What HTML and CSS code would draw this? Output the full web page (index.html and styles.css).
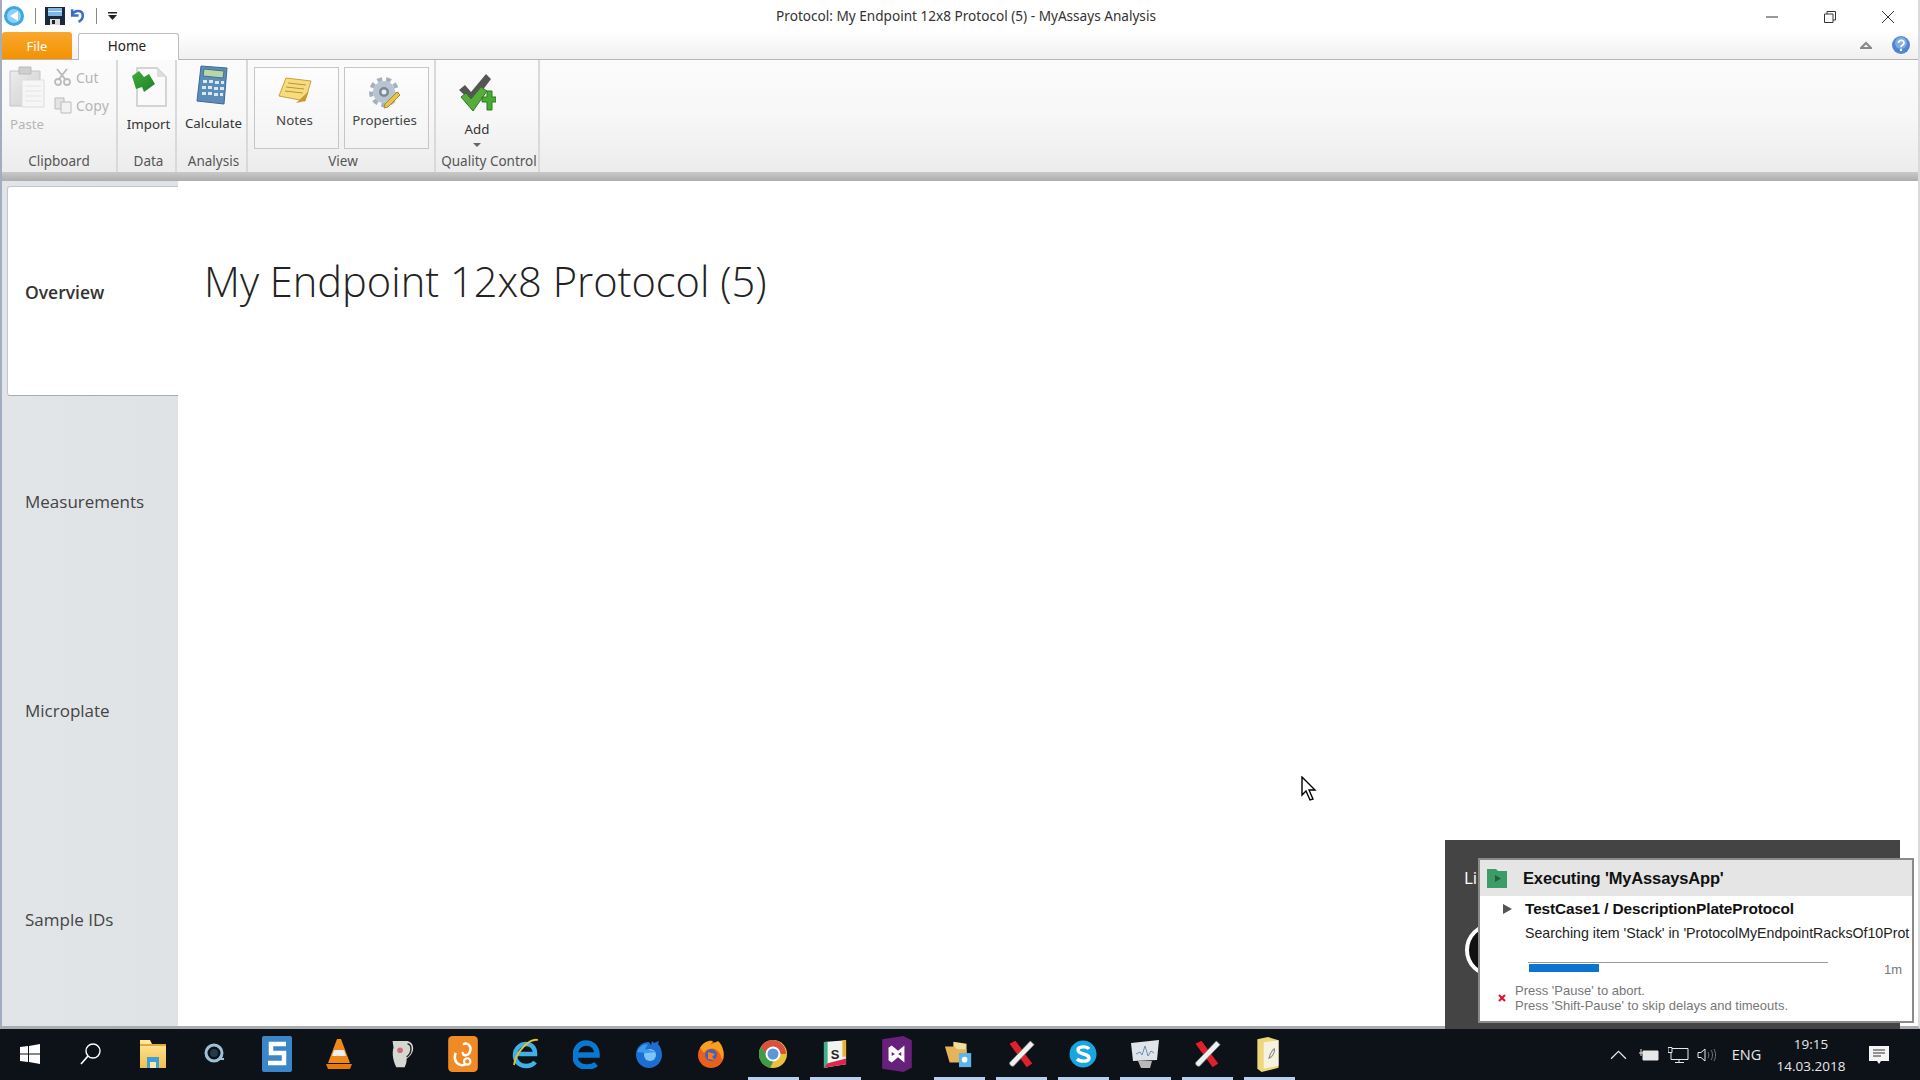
FILE: index.html
```html
<!DOCTYPE html>
<html lang="en">
<head>
<meta charset="utf-8">
<title>Protocol: My Endpoint 12x8 Protocol (5) - MyAssays Analysis</title>
<link rel="stylesheet" href="styles.css">
</head>
<body>
<svg class="defs" width="0" height="0" aria-hidden="true">
  <defs>
    <linearGradient id="gGreen" x1="0" y1="0" x2="1" y2="1"><stop offset="0" stop-color="#3fae3a"/><stop offset="1" stop-color="#1f7f2a"/></linearGradient>
    <linearGradient id="gFolder" x1="0" y1="0" x2="0" y2="1"><stop offset="0" stop-color="#ffe9a0"/><stop offset="1" stop-color="#f2c04a"/></linearGradient>
    <linearGradient id="gClip" x1="0" y1="0" x2="1" y2="1"><stop offset="0" stop-color="#ececec"/><stop offset="1" stop-color="#cfcfcf"/></linearGradient>
    <symbol id="scroll" viewBox="0 0 32 32">
      <path d="M4 5l6-3 18 24-6 4z" fill="#e0202c"/>
      <path d="M26 2l4 4L8 29c-2 1-5-2-4-4z" fill="#f0f0f0" stroke="#777" stroke-width=".8"/>
      <path d="M4 5l6-3 6 8-5 5z" fill="#e0202c"/>
    </symbol>
  </defs>
</svg>

<div class="app">
  <header class="titlebar">
    <div class="qat">
      <svg class="q-app" viewBox="0 0 20 20"><circle cx="10" cy="10" r="10" fill="#3ea6e6"/><circle cx="10" cy="10" r="7" fill="#8fd0f5"/><path d="M14 5v10L6 10z" fill="#fff"/></svg>
      <span class="q-sep"></span>
      <svg class="q-save" viewBox="0 0 20 20"><path d="M0 1h20v18H0z" fill="#1b2a3a"/><path d="M3 2h14v8H3z" fill="#7fb7e8"/><path d="M3 5h14v1H3z" fill="#dfeefa"/><path d="M5 13h10v6H5z" fill="#ddd"/><path d="M7 14h3v4H7z" fill="#222"/></svg>
      <svg class="q-undo" viewBox="0 0 16 16"><path d="M3 2v6h6" fill="none" stroke="#3a6fc4" stroke-width="2.400"/><path d="M3 7c3-5 10-4 10 1 0 3-2 5-4 6" fill="none" stroke="#3a6fc4" stroke-width="2.400"/></svg>
      <span class="q-sep q-sep-2"></span>
      <svg class="q-more" viewBox="0 0 9 8"><path d="M0 0h9v1.500H0z" fill="#222"/><path d="M0 3h9L4.500 8z" fill="#222"/></svg>
    </div>
    <div class="window-title">Protocol: My Endpoint 12x8 Protocol (5) - MyAssays Analysis</div>
    <div class="window-controls">
      <svg class="wc" viewBox="0 0 12 12"><path d="M0 6h12" stroke="#333" stroke-width="1"/></svg>
      <svg class="wc" viewBox="0 0 12 12"><path d="M.5 3h8.500v8.500H.5zM3 3V.5h8.500V9H9" fill="none" stroke="#333"/></svg>
      <svg class="wc" viewBox="0 0 12 12"><path d="M0 0l12 12M12 0L0 12" stroke="#333"/></svg>
    </div>
  </header>

  <nav class="tabrow">
    <div class="tab-file">File</div>
    <div class="tab-home">Home</div>
    <div class="tab-right">
      <svg class="collapse" viewBox="0 0 12 9"><path d="M1 7l5-5 5 5z" fill="none" stroke="#888" stroke-width="2"/></svg>
      <svg class="help" viewBox="0 0 18 18"><circle cx="9" cy="9" r="9" fill="#4f86d0"/><circle cx="9" cy="7" r="6" fill="#9fc4ee" opacity=".6"/><path d="M6.500 7c0-3.500 5.500-3.500 5.500 0 0 2-3 2-3 4" fill="none" stroke="#fff" stroke-width="1.800"/><circle cx="9" cy="14" r="1.200" fill="#fff"/></svg>
    </div>
  </nav>

  <section class="ribbon">
    <div class="group g-clip">
      <div class="group-body clip-body">
        <div class="big disabled">
          <svg class="ic-paste" viewBox="0 0 36 42"><path d="M1 5h30v35H1z" fill="url(#gClip)" stroke="#c4c4c4"/><path d="M10 1h12v7H10z" fill="#cfcfcf" stroke="#bbb"/><path d="M13 14h22v27H13z" fill="#f6f6f6" stroke="#ddd"/><path d="M16 20h16M16 25h16M16 30h16M16 35h16" stroke="#e4e4e4"/></svg>
          <span class="big-label">Paste</span>
        </div>
        <div class="clip-small">
          <div class="small disabled">
            <svg class="ic-small" viewBox="0 0 18 18"><path d="M3 1l8 10M13 1L5 11" stroke="#bbb" stroke-width="2"/><circle cx="4" cy="14" r="3" fill="none" stroke="#bbb" stroke-width="1.800"/><circle cx="13" cy="14" r="3" fill="none" stroke="#bbb" stroke-width="1.800"/></svg>
            <span>Cut</span>
          </div>
          <div class="small disabled">
            <svg class="ic-small" viewBox="0 0 18 18"><path d="M1 2h9v11H1z" fill="#e4e4e4" stroke="#bbb"/><path d="M7 6h10v11H7z" fill="#f2f2f2" stroke="#bbb"/></svg>
            <span>Copy</span>
          </div>
        </div>
      </div>
      <div class="group-label">Clipboard</div>
    </div>

    <div class="group g-data">
      <div class="group-body col">
        <svg class="ic-import" viewBox="0 0 36 40"><path d="M6 1h20l9 9v29H6z" fill="#fafafa" stroke="#c8c8c8" stroke-width="1.500"/><path d="M26 1v9h9z" fill="#ddd"/><path d="M1 9l7-5 5 6 5-3 6 10-11 8-2-5-6 2z" fill="url(#gGreen)"/></svg>
        <span class="big-label">Import</span>
      </div>
      <div class="group-label">Data</div>
    </div>

    <div class="group g-analysis">
      <div class="group-body col">
        <svg class="ic-calc" viewBox="0 0 36 42"><path d="M5 1l26 2-3 36-27-3z" fill="#5b8db8" stroke="#3c6a94"/><path d="M8 4l20 2-1 7-20-2z" fill="#b9d6a6" stroke="#48708f"/><g fill="#d9e8f4"><path d="M7 15h4v3H7zM13 15h4v3h-4zM19 16h4v3h-4zM25 16h3v3h-3zM6 21h4v3H6zM12 21h4v3h-4zM18 22h4v3h-4zM24 22h4v3h-4zM6 27h4v3H6zM12 27h4v3h-4zM18 28h4v3h-4zM24 28h3v3h-3z"/></g></svg>
        <span class="big-label">Calculate</span>
      </div>
      <div class="group-label">Analysis</div>
    </div>

    <div class="group g-view">
      <div class="group-body view-body">
        <div class="toggle">
          <svg class="ic-notes" viewBox="0 0 34 30"><path d="M8 2l25 3-6 20-26-5z" fill="#f7dc7e" stroke="#c9a23c"/><path d="M10 7l18 2M8 11l18 2M7 15l18 2" stroke="#b8953a"/><path d="M18 27l9-2 4-10z" fill="#c99a2a"/></svg>
          <span class="toggle-label">Notes</span>
        </div>
        <div class="toggle">
          <svg class="ic-props" viewBox="0 0 34 34"><circle cx="16" cy="16" r="11" fill="#b8c3d0"/><circle cx="16" cy="16" r="13" fill="none" stroke="#a4b0bf" stroke-width="4" stroke-dasharray="5 4"/><circle cx="16" cy="16" r="5" fill="#7b8794"/><circle cx="16" cy="16" r="2.500" fill="#e8edf2"/><path d="M17 28l12-12 3 3-12 12-4 1z" fill="#e8c24a" stroke="#a98a2c"/></svg>
          <span class="toggle-label">Properties</span>
        </div>
      </div>
      <div class="group-label">View</div>
    </div>

    <div class="group g-qc">
      <div class="group-body qc-body">
        <svg class="ic-add" viewBox="0 0 38 38"><path d="M1 17l6-5 6 7L28 1l5 5-18 24z" fill="#555"/><path d="M3 24l5-4 5 6 10-12 6 4-14 20z" fill="#56ad3c" stroke="#2d7a28"/><path d="M24 24h5v-6h5v6h4v5h-4v8h-5v-8h-5z" fill="#48ac32" stroke="#287a20"/></svg>
        <span class="big-label add-label">Add</span>
        <span class="drop"></span>
      </div>
      <div class="group-label">Quality Control</div>
    </div>
  </section>

  <div class="ribbon-shadow"></div>

  <main class="content">
    <aside class="sidebar">
      <div class="side-item active">Overview</div>
      <div class="side-item">Measurements</div>
      <div class="side-item">Microplate</div>
      <div class="side-item">Sample IDs</div>
    </aside>
    <div class="page">
      <h1>My Endpoint 12x8 Protocol (5)</h1>
    </div>
  </main>
</div>

<footer class="taskbar">
  <div class="tb-apps">
    <div class="slot s-start"><svg viewBox="0 0 20 20" class="i20"><path d="M0 3l8-1v7.500H0zM9 2l11-2v9.500H9zM0 10.500h8V18l-8-1zM9 10.500h11V20L9 18z" fill="#fff"/></svg></div>
    <div class="slot"><svg viewBox="0 0 24 24" class="i24"><circle cx="14" cy="9" r="7" fill="none" stroke="#fff" stroke-width="1.400"/><path d="M9 14l-7 8" stroke="#fff" stroke-width="1.600"/></svg></div>
    <div class="slot"><svg viewBox="0 0 28 30" class="i28"><path d="M1 1h10l2 4h14v24H1z" fill="url(#gFolder)"/><path d="M1 5h26v2H1z" fill="#e2a830"/><path d="M8 18h12v11H8z" fill="#3f9fd8"/><path d="M11 23h6v6h-6z" fill="#f5e8b0"/></svg></div>
    <div class="slot"><svg viewBox="0 0 24 24" class="i24"><circle cx="11" cy="11" r="8" fill="none" stroke="#9fc0d8" stroke-width="3"/><circle cx="11" cy="11" r="4" fill="#25384a"/><path d="M15 17h6" stroke="#9fc0d8" stroke-width="2"/></svg></div>
    <div class="slot"><svg viewBox="0 0 30 36" class="i-s"><rect width="30" height="36" rx="2" fill="#3b86c8"/><path d="M24 8H9v9h13v10H6" fill="none" stroke="#fff" stroke-width="4.500"/></svg></div>
    <div class="slot"><svg viewBox="0 0 26 30" class="i28"><path d="M11 0h4l9 24H2z" fill="#f08a16"/><path d="M8 11h10l2 6H6z" fill="#eee"/><path d="M0 25h26l-2 5H2z" fill="#e87a0c"/></svg></div>
    <div class="slot"><svg viewBox="0 0 28 32" class="i28"><path d="M5 2h15c3 0 7 2 7 8 0 5-4 9-7 11 0 5-1 6-2 9H9C6 24 4 16 6 9z" fill="#d7d7d2"/><path d="M21 5c5 1 5 10-1 14" fill="none" stroke="#222" stroke-width="1.500"/><circle cx="13" cy="12" r="3" fill="#c8707a"/></svg></div>
    <div class="slot"><svg viewBox="0 0 28 34" class="i-s"><rect width="28" height="34" rx="4" fill="#ef8a24"/><path d="M7 16c-3 9 4 13 9 11M14 8c5-3 9 3 6 8-3 4-7 2-6-1" fill="none" stroke="#fff" stroke-width="2.400"/><circle cx="18" cy="24" r="3" fill="none" stroke="#fff" stroke-width="2"/></svg></div>
    <div class="slot"><svg viewBox="0 0 30 34" class="i-s"><path d="M6 17h19c0-7-4-10-9-10S5 11 5 18s5 11 11 11c4 0 7-1 9-4" fill="none" stroke="#3fb0e8" stroke-width="4.500"/><path d="M28 3C20 1 6 14 4 28" fill="none" stroke="#e8c030" stroke-width="1.800"/></svg></div>
    <div class="slot"><svg viewBox="0 0 28 30" class="i28"><path d="M3 16h21c0-8-5-12-11-12S2 9 2 17s6 11 12 11c4 0 7-1 9-3" fill="none" stroke="#0a78d0" stroke-width="5.500"/></svg></div>
    <div class="slot"><svg viewBox="0 0 30 30" class="i30"><path d="M15 3C7 3 2 9 2 16s6 13 13 13 13-6 13-13c0-5-2-9-4-11l1-3-5 2-2-2-1 4z" fill="#1c6fd0"/><circle cx="16" cy="16" r="6" fill="#7ec4f4"/><path d="M3 13c2-5 6-8 11-8l-3 5 12 3-10 1z" fill="#3a9cec"/></svg></div>
    <div class="slot"><svg viewBox="0 0 30 30" class="i30"><circle cx="15" cy="16" r="13" fill="#e8601c"/><circle cx="15" cy="16" r="6" fill="#4a60b8"/><path d="M4 9c3-6 9-8 13-7l-3 4 8-4c5 4 7 12 4 19-1-7-6-13-12-11-3 0-5 2-6 4z" fill="#f9a020"/><path d="M12 13l7 2-3 3 3 3-7-1z" fill="#f08020"/></svg></div>
    <div class="slot run"><svg viewBox="0 0 30 30" class="i30"><circle cx="15" cy="15" r="14" fill="#e8c23a"/><path d="M15 1a14 14 0 0 0-12 7l7 12 5-5h13A14 14 0 0 0 15 1z" fill="#d9503f"/><path d="M3 8a14 14 0 0 0 9 21l5-10-7-2z" fill="#3f9a4a"/><circle cx="15" cy="15" r="6.500" fill="#5a96d8" stroke="#fff" stroke-width="2"/></svg></div>
    <div class="slot run"><svg viewBox="0 0 26 32" class="i26"><path d="M1 3l24-2v26L1 31z" fill="#f3f3f0"/><path d="M1 3l4 0v28l-4 0z" fill="#3fb08c"/><path d="M21 1h4v18h-4z" fill="#ecb22e"/><path d="M1 31l24-4v-6L5 26z" fill="#dc2850"/><text x="13" y="21" class="slack-s">S</text></svg></div>
    <div class="slot"><svg viewBox="0 0 28 34" class="i-s"><path d="M20 0l8 4v26l-8 4-20-3V3z" fill="#68217a"/><path d="M6 11l3-2 6 5 6-5v16l-6-5-6 5-3-2v-12zm3 4v4l3-2zm9 0l-3 2 3 2z" fill="#fff" fill-rule="evenodd"/></svg></div>
    <div class="slot run"><svg viewBox="0 0 30 32" class="i30"><path d="M9 3l14 2v18H9z" fill="#f4dc9a"/><path d="M0 8h10l3 3h10v14H5z" fill="#e3b45a"/><path d="M15 15h13v15H15z" fill="#5cb4e8"/><circle cx="21" cy="22" r="3" fill="#fff"/></svg></div>
    <div class="slot run"><svg viewBox="0 0 32 32" class="i30"><use href="#scroll"/></svg></div>
    <div class="slot run"><svg viewBox="0 0 28 30" class="i28"><circle cx="14" cy="15" r="13.500" fill="#19a5e0"/><path d="M20 10c-2-3-11-3-11 1 0 5 11 3 11 8 0 4-9 4-12 1" fill="none" stroke="#fff" stroke-width="3.400"/></svg></div>
    <div class="slot run"><svg viewBox="0 0 30 30" class="i30"><path d="M1 4l28-3-2 20-24 1z" fill="#e0e4e8"/><path d="M6 15l4-2 2 3 3-9 3 10 3-5 3 2" fill="none" stroke="#6a8eb8"/><path d="M8 22h14l-2 7H11z" fill="#b8b8b8"/></svg></div>
    <div class="slot run"><svg viewBox="0 0 32 32" class="i30"><use href="#scroll"/></svg></div>
    <div class="slot run"><svg viewBox="0 0 24 34" class="i-s"><path d="M1 3l10-2 10 3v26l-16 4-4-3z" fill="#eed77a"/><path d="M7 6l14-2v24L7 31z" fill="#f6f2df"/><path d="M12 21c3-1 6-6 5-9-3 2-4 5-5 9z" fill="none" stroke="#888"/></svg></div>
  </div>
  <div class="tray">
    <svg class="tr-chev" viewBox="0 0 16 9"><path d="M1 8l7-7 7 7" fill="none" stroke="#e8e8e8" stroke-width="1.200"/></svg>
    <svg class="tr-bat" viewBox="0 0 20 12"><path d="M4 2h15v9H4z" fill="#e8e8e8" stroke="#e8e8e8"/><path d="M0 4h4M2 0v7" stroke="#e8e8e8"/></svg>
    <svg class="tr-net" viewBox="0 0 21 16"><path d="M3 1.500h17v11H3z" fill="none" stroke="#e8e8e8"/><path d="M11 13v2M7 15.500h9" stroke="#e8e8e8"/><path d="M0 .5h4v5H0z" fill="#0c1118" stroke="#e8e8e8"/></svg>
    <svg class="tr-vol" viewBox="0 0 20 14"><path d="M1 4.500h3L8 1v12L4 9.500H1z" fill="none" stroke="#e8e8e8"/><path d="M11 4c1 2 1 4 0 6M14 2c2 3 2 7 0 10M17 1c2 4 2 8 0 12" fill="none" stroke="#777"/></svg>
    <span class="tr-lang">ENG</span>
    <div class="tr-clock"><span>19:15</span><span>14.03.2018</span></div>
    <svg class="tr-note" viewBox="0 0 20 20"><path d="M0 1h20v15h-8l-2 3-2-3H0z" fill="#f4f4f4"/><path d="M4 5h12M4 8h12M4 11h8" stroke="#333"/></svg>
  </div>
</footer>

<div class="behind">
  <span class="behind-text">Li</span>
  <span class="behind-ring"></span>
</div>

<aside class="runner">
  <div class="runner-head">
    <svg class="runner-icon" viewBox="0 0 20 19"><path d="M0 0h9l2 2h9v17H0z" fill="#3c9c68"/><path d="M8 6v7l6-3.500z" fill="#24603e"/></svg>
    <span>Executing 'MyAssaysApp'</span>
  </div>
  <div class="runner-case"><span class="tri"></span><span>TestCase1 / DescriptionPlateProtocol</span></div>
  <div class="runner-search">Searching item 'Stack' in 'ProtocolMyEndpointRacksOf10Prot</div>
  <div class="runner-progress">
    <div class="track"><div class="fill"></div></div>
    <span class="eta">1m</span>
  </div>
  <div class="runner-hint">
    <svg class="hint-x" viewBox="0 0 8 8"><path d="M1 1l6 6M7 1L1 7" stroke="#e0102c" stroke-width="2"/></svg>
    <p>Press 'Pause' to abort.<br>Press 'Shift-Pause' to skip delays and timeouts.</p>
  </div>
</aside>

<svg class="cursor" viewBox="0 0 16 25"><path d="M1 1v18l4-4 4 9 3-1-4-9h6z" fill="#fff" stroke="#000" stroke-width="1.400"/></svg>
</body>
</html>
```

FILE: styles.css
```css
* { box-sizing: border-box; }
html, body { margin: 0; padding: 0; }
body {
  width: 1920px;
  height: 1080px;
  overflow: hidden;
  position: relative;
  display: flex;
  flex-direction: column;
  font-family: "Noto Sans", "Open Sans", sans-serif;
  background: #0d1118;
  color: #222;
}
.defs { position: absolute; }
svg { display: block; flex: none; }

.app {
  height: 1029px;
  flex: none;
  display: flex;
  flex-direction: column;
  background: #fff;
  border-left: 2px solid #a4adc0;
  border-right: 2px solid #d8dade;
  border-bottom: 3px solid #a9adb0;
}

/* Title bar */
.titlebar {
  height: 31px;
  flex: none;
  display: grid;
  grid-template-columns: 1fr auto 1fr;
  align-items: center;
}
.qat { display: flex; align-items: center; padding-left: 2px; }
.q-app { width: 20px; height: 20px; }
.q-sep { width: 1px; height: 16px; background: #888; margin: 0 9px 0 11px; }
.q-save { width: 20px; height: 20px; }
.q-undo { width: 17px; height: 17px; margin-left: 4px; }
.q-sep-2 { margin: 0 11px 0 10px; }
.q-more { width: 9px; height: 8px; }
.window-title { font-size: 13.600px; color: #333; padding-left: 12px; }
.window-controls { display: flex; justify-content: flex-end; gap: 46px; padding-right: 24px; padding-top: 3px; }
.wc { width: 12px; height: 12px; }

/* Tabs */
.tabrow {
  height: 29px;
  flex: none;
  display: flex;
  align-items: flex-end;
  background: linear-gradient(#ffffff, #f0f0f0);
  border-bottom: 1px solid #b4b4b4;
  padding-top: 2px;
}
.tab-file {
  width: 70px;
  height: 27px;
  display: flex;
  align-items: center;
  justify-content: center;
  font-size: 13px;
  color: #fff;
  background: linear-gradient(#f9a72e, #f39200);
  border-radius: 3px 3px 0 0;
}
.tab-home {
  width: 101px;
  height: 27px;
  margin-left: 6px;
  display: flex;
  align-items: center;
  justify-content: center;
  padding: 0 3px 2px 0;
  font-size: 13.500px;
  background: #fff;
  border: 1px solid #bdbdbd;
  border-bottom: 0;
  border-radius: 3px 3px 0 0;
  margin-bottom: -1px;
}
.tab-right { margin-left: auto; display: flex; align-items: center; gap: 20px; padding: 0 8px 2px 0; align-self: center; }
.collapse { width: 12px; height: 9px; }
.help { width: 18px; height: 18px; }

/* Ribbon */
.ribbon {
  height: 112px;
  flex: none;
  display: flex;
  background: linear-gradient(#fbfbfb, #f7f7f7 50%, #ececec);
  font-size: 13px;
}
.group {
  flex: none;
  display: flex;
  flex-direction: column;
  border-right: 2px solid #d9d9d9;
}
.g-clip { width: 116px; }
.g-data { width: 59px; }
.g-analysis { width: 71px; }
.g-view { width: 188px; }
.g-qc { width: 104px; }
.group-body { flex: 1; min-height: 0; }
.group-label {
  height: 22px;
  flex: none;
  text-align: center;
  font-size: 13.500px;
  line-height: 23px;
  color: #555;
  white-space: nowrap;
}
.g-data .group-label, .g-analysis .group-label, .g-view .group-label, .g-qc .group-label { padding-left: 4px; }
.col { display: flex; flex-direction: column; align-items: center; padding: 7px 0 0 4px; }
.big-label { font-size: 13.300px; line-height: 18px; color: #333; }
.disabled .big-label, .disabled span { color: #b5b5b5; }
.clip-body { display: flex; padding: 6px 0 0 6px; }
.big { display: flex; flex-direction: column; align-items: center; width: 38px; }
.ic-paste { width: 36px; height: 42px; margin-bottom: 7px; }
.clip-small { margin-left: 8px; padding-top: 2px; display: flex; flex-direction: column; gap: 10px; }
.small { display: flex; align-items: center; gap: 4px; height: 18px; font-size: 14px; }
.ic-small { width: 18px; height: 18px; }
.ic-import { width: 36px; height: 40px; margin-bottom: 8px; }
.ic-calc { width: 36px; height: 42px; margin-bottom: 7px; margin-top: -2px; }
.view-body { display: flex; gap: 5px; padding: 7px 0 0 6px; }
.toggle {
  width: 85px;
  height: 82px;
  border: 1px solid #c6c6c6;
  background: linear-gradient(#fdfdfd, #f3f3f3);
  display: flex;
  flex-direction: column;
  align-items: center;
  padding: 8px 4px 0 0;
}
.ic-notes { width: 34px; height: 30px; }
.ic-props { width: 34px; height: 34px; margin-bottom: -4px; }
.toggle-label { font-size: 13.300px; line-height: 18px; margin-top: 5px; color: #444; }
.qc-body { display: flex; flex-direction: column; align-items: center; padding: 13px 20px 0 0; }
.ic-add { width: 38px; height: 38px; }
.add-label { margin-top: 9px; }
.drop {
  width: 0;
  height: 0;
  margin-top: 5px;
  border-left: 4px solid transparent;
  border-right: 4px solid transparent;
  border-top: 4px solid #666;
}
.ribbon-shadow {
  height: 9px;
  flex: none;
  background: linear-gradient(#c9c9c9, #adadad);
}

/* Content */
.content { flex: 1; min-height: 0; display: flex; }
.sidebar {
  width: 176px;
  flex: none;
  padding-top: 5px;
  background: linear-gradient(90deg, #e2e5e8, #dfe3e6);
}
.side-item {
  height: 209px;
  display: flex;
  align-items: center;
  padding: 3px 0 0 23px;
  font-size: 17px;
  color: #444;
  font-family: "Open Sans", sans-serif;
}
.side-item.active {
  height: 210px;
  margin-left: 5px;
  margin-bottom: -1px;
  padding: 1px 0 0 17px;
  background: #fff;
  border-top: 1px solid #c2c6cc;
  border-left: 1px solid #c2c6cc;
  border-bottom: 1px solid #a8acb2;
  border-radius: 3px 0 0 3px;
  font-size: 17.500px;
  font-weight: 600;
  color: #333;
}
.page { flex: 1; padding: 71px 0 0 26px; }
.page h1 {
  margin: 0;
  font-family: "Open Sans", sans-serif;
  font-weight: 300;
  font-size: 41.600px;
  line-height: 58px;
  color: #222;
}

/* Taskbar */
.taskbar {
  flex: 1;
  min-height: 0;
  display: flex;
  justify-content: space-between;
  background: #0d1118;
}
.tb-apps { display: flex; }
.slot {
  width: 62px;
  height: 51px;
  display: flex;
  align-items: center;
  justify-content: center;
  padding-bottom: 1px;
}
.s-start { width: 60px; }
.run { background: linear-gradient(#b7cff0, #b7cff0) center bottom / 51px 3px no-repeat; }
.i20 { width: 20px; height: 20px; }
.i24 { width: 24px; height: 24px; }
.i26 { width: 24px; height: 30px; }
.i28 { width: 28px; height: 30px; }
.i30 { width: 30px; height: 30px; }
.i-s { width: 30px; height: 36px; }
.slack-s { font: bold 14px "Liberation Sans", sans-serif; fill: #222; text-anchor: middle; }
.tray { display: flex; align-items: center; color: #e8e8e8; font-family: "Open Sans", sans-serif; font-size: 13.500px; padding-right: 31px; }
.tr-chev { width: 17px; height: 10px; }
.tr-bat { width: 20px; height: 12px; margin-left: 12px; }
.tr-net { width: 21px; height: 16px; margin-left: 9px; }
.tr-vol { width: 20px; height: 14px; margin-left: 8px; }
.tr-lang { margin-left: 13px; width: 33px; text-align: center; font-size: 14.500px; }
.tr-clock { margin-left: 12px; width: 72px; display: flex; flex-direction: column; align-items: center; line-height: 22px; }
.tr-note { width: 20px; height: 20px; margin-left: 22px; }

/* Overlays */
.behind {
  position: absolute;
  left: 1445px;
  top: 840px;
  width: 455px;
  height: 189px;
  background: #444;
  overflow: hidden;
}
.behind-text { position: absolute; left: 19px; top: 26px; color: #fff; font: 17px "Open Sans", sans-serif; }
.behind-ring {
  position: absolute;
  left: 20px;
  top: 83px;
  width: 54px;
  height: 54px;
  border-radius: 50%;
  background: #111;
  border: 4px solid #fff;
}
.runner {
  position: absolute;
  left: 1478px;
  top: 858px;
  width: 436px;
  height: 165px;
  background: #fff;
  border: 2px solid #8a8a8a;
  font-family: "Liberation Sans", sans-serif;
  overflow: hidden;
}
.runner-head {
  height: 36px;
  background: #e5e5e5;
  display: flex;
  align-items: center;
  gap: 16px;
  padding-left: 7px;
  font-size: 16.500px;
  font-weight: bold;
  letter-spacing: -.15px;
  color: #111;
}
.runner-icon { width: 20px; height: 19px; }
.runner-case {
  display: flex;
  align-items: center;
  height: 25px;
  padding-left: 23px;
  gap: 13px;
  font-size: 15.400px;
  font-weight: bold;
  letter-spacing: -.1px;
  color: #111;
}
.tri { width: 0; height: 0; border-left: 9px solid #555; border-top: 5px solid transparent; border-bottom: 5px solid transparent; }
.runner-search { height: 24px; font-size: 14.200px; padding-left: 45px; line-height: 24px; color: #222; white-space: nowrap; }
.runner-progress { display: flex; height: 37px; padding: 17px 0 0 48px; position: relative; }
.track { width: 300px; height: 12px; border-top: 1px solid #999; padding: 1px 0 0 1px; }
.fill { width: 70px; height: 8px; background: #0a74d0; }
.eta { margin: -1px 0 0 56px; font-size: 13px; color: #777; line-height: 18px; }
.runner-hint { display: flex; align-items: center; padding: 1px 0 0 18px; gap: 9px; }
.hint-x { width: 8px; height: 8px; }
.runner-hint p { margin: 0; font-size: 13px; line-height: 15px; color: #777; }
.cursor { position: absolute; left: 1301px; top: 776px; width: 16px; height: 25px; }
```
